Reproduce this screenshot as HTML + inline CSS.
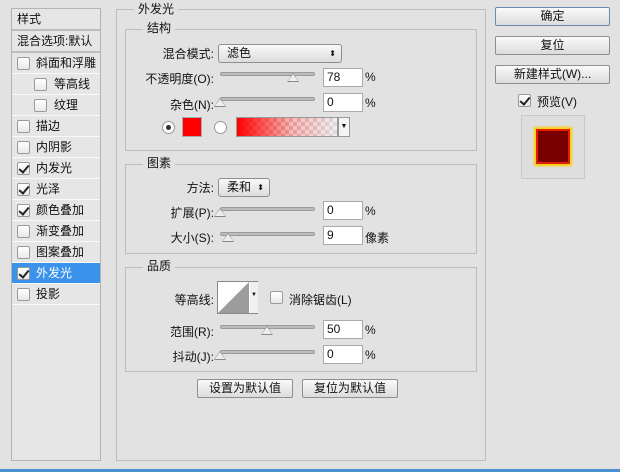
<!DOCTYPE html><html><head><meta charset="utf-8"><style>
*{box-sizing:border-box;margin:0;padding:0}
body{width:620px;height:472px;background:#e2e2e2;font-family:"Liberation Sans","Noto Sans CJK SC",sans-serif;font-size:12px;color:#111;position:relative;overflow:hidden}
.a{position:absolute}
.list{left:11px;top:8px;width:90px;height:453px;border:1px solid #b4b4b4;background:#e6e6e6}
.row{position:absolute;left:0;width:88px;height:21px;border-bottom:1px solid #fafafa;line-height:20px;padding-left:24px}
.cb{position:absolute;width:13px;height:13px;border:1px solid #9a9a9a;background:linear-gradient(#fff,#e8e8e8);border-radius:2px}
.row .cb{left:5px;top:4px}
.ck::after{content:"";position:absolute;left:3px;top:0px;width:4px;height:8px;border:solid #222;border-width:0 2px 2px 0;transform:rotate(40deg)}
.fs{border:1px solid #bdbdbd}
.lg{background:#e2e2e2;padding:0 4px;line-height:14px}
.r{text-align:right;width:100px}
.sl{height:4px;background:#bcbcbc;border:1px solid #9a9a9a;border-radius:2px}
.th{width:0;height:0;border-left:6px solid transparent;border-right:6px solid transparent;border-bottom:9px solid #888}
.th::after{content:"";position:absolute;left:-5px;top:1px;border-left:5px solid transparent;border-right:5px solid transparent;border-bottom:7px solid #eee}
.inp{width:40px;height:19px;background:#fff;border:1px solid #aaa;padding-left:3px;line-height:17px}
.btn{border:1px solid #8f8f8f;border-radius:2px;background:linear-gradient(#fafafa,#dcdcdc);text-align:center;line-height:17px;height:19px}
</style></head><body>
<div class="a list">
<div class="row" style="top:0;padding-left:5px;border-bottom:2px solid #bdbdbd;height:22px">样式</div>
<div class="row" style="top:22px;padding-left:5px;height:22px;border-bottom:2px solid #bdbdbd">混合选项:默认</div>
<div class="row" style="top:44px"><span class="cb"></span>斜面和浮雕</div>
<div class="row" style="top:65px;padding-left:42px"><span class="cb" style="left:22px"></span>等高线</div>
<div class="row" style="top:86px;padding-left:42px"><span class="cb" style="left:22px"></span>纹理</div>
<div class="row" style="top:107px"><span class="cb"></span>描边</div>
<div class="row" style="top:128px"><span class="cb"></span>内阴影</div>
<div class="row" style="top:149px"><span class="cb ck"></span>内发光</div>
<div class="row" style="top:170px"><span class="cb ck"></span>光泽</div>
<div class="row" style="top:191px"><span class="cb ck"></span>颜色叠加</div>
<div class="row" style="top:212px"><span class="cb"></span>渐变叠加</div>
<div class="row" style="top:233px"><span class="cb"></span>图案叠加</div>
<div class="row" style="top:254px;background:#3a92ea;color:#fff"><span class="cb ck"></span>外发光</div>
<div class="row" style="top:275px"><span class="cb"></span>投影</div>
</div>
<div class="a fs" style="left:116px;top:9px;width:370px;height:452px"></div>
<div class="a lg" style="left:134px;top:2px">外发光</div>
<div class="a fs" style="left:125px;top:29px;width:352px;height:122px"></div>
<div class="a lg" style="left:143px;top:21px">结构</div>
<div class="a r" style="left:114px;top:45px">混合模式:</div>
<div class="a btn" style="left:218px;top:44px;width:124px;text-align:left;padding-left:8px;border-radius:3px">滤色<span style="position:absolute;right:5px;font-size:8px">⬍</span></div>
<div class="a r" style="left:114px;top:70px">不透明度(O):</div>
<div class="a sl" style="left:220px;top:72px;width:95px"></div><div class="a th" style="left:287px;top:73px"></div>
<div class="a inp" style="left:323px;top:68px">78</div><div class="a" style="left:365px;top:70px">%</div>
<div class="a r" style="left:114px;top:96px">杂色(N):</div>
<div class="a sl" style="left:220px;top:97px;width:95px"></div><div class="a th" style="left:214px;top:98px"></div>
<div class="a inp" style="left:323px;top:93px">0</div><div class="a" style="left:365px;top:96px">%</div>
<div class="a" style="left:162px;top:121px;width:13px;height:13px;border:1px solid #999;border-radius:50%;background:#fff"><div class="a" style="left:3px;top:3px;width:5px;height:5px;border-radius:50%;background:#333"></div></div>
<div class="a" style="left:182px;top:117px;width:20px;height:20px;background:#f00;border:1px solid #aaa"></div>
<div class="a" style="left:214px;top:121px;width:13px;height:13px;border:1px solid #999;border-radius:50%;background:#fff"></div>
<div class="a" style="left:236px;top:117px;width:102px;height:20px;border:1px solid #999;background:linear-gradient(90deg,#f00,rgba(255,80,80,.4) 55%,rgba(230,230,230,.6)),repeating-conic-gradient(#ccc 0 25%,#fff 0 50%) 0 0/8px 8px"></div>
<div class="a" style="left:338px;top:117px;width:12px;height:20px;border:1px solid #999;background:#f4f4f4;font-size:7px;text-align:center;line-height:18px">▼</div>
<div class="a fs" style="left:125px;top:164px;width:352px;height:90px"></div>
<div class="a lg" style="left:143px;top:156px">图素</div>
<div class="a r" style="left:114px;top:179px">方法:</div>
<div class="a btn" style="left:218px;top:178px;width:52px;text-align:left;padding-left:8px;border-radius:3px">柔和<span style="position:absolute;right:5px;font-size:8px">⬍</span></div>
<div class="a r" style="left:114px;top:204px">扩展(P):</div>
<div class="a sl" style="left:220px;top:207px;width:95px"></div><div class="a th" style="left:214px;top:208px"></div>
<div class="a inp" style="left:323px;top:201px">0</div><div class="a" style="left:365px;top:204px">%</div>
<div class="a r" style="left:114px;top:229px">大小(S):</div>
<div class="a sl" style="left:220px;top:232px;width:95px"></div><div class="a th" style="left:222px;top:233px"></div>
<div class="a inp" style="left:323px;top:226px">9</div><div class="a" style="left:365px;top:229px">像素</div>
<div class="a fs" style="left:125px;top:267px;width:352px;height:105px"></div>
<div class="a lg" style="left:143px;top:259px">品质</div>
<div class="a r" style="left:114px;top:291px">等高线:</div>
<div class="a" style="left:217px;top:281px;width:41px;height:33px;border:1px solid #888;background:#fff"><svg width="33" height="31" class="a" style="left:0;top:0"><polygon points="0,31 31,0 31,31" fill="#9c9c9c"/></svg><div class="a" style="left:32px;top:0;width:8px;height:31px;background:#f0f0f0;font-size:6px;line-height:26px;text-align:center">▼</div></div>
<div class="a cb" style="left:270px;top:291px"></div><div class="a" style="left:289px;top:291px">消除锯齿(L)</div>
<div class="a r" style="left:114px;top:323px">范围(R):</div>
<div class="a sl" style="left:220px;top:325px;width:95px"></div><div class="a th" style="left:261px;top:326px"></div>
<div class="a inp" style="left:323px;top:320px">50</div><div class="a" style="left:365px;top:323px">%</div>
<div class="a r" style="left:114px;top:348px">抖动(J):</div>
<div class="a sl" style="left:220px;top:350px;width:95px"></div><div class="a th" style="left:214px;top:351px"></div>
<div class="a inp" style="left:323px;top:345px">0</div><div class="a" style="left:365px;top:348px">%</div>
<div class="a btn" style="left:197px;top:379px;width:96px">设置为默认值</div>
<div class="a btn" style="left:302px;top:379px;width:96px">复位为默认值</div>
<div class="a btn" style="left:495px;top:7px;width:115px;border-color:#6b8ab0">确定</div>
<div class="a btn" style="left:495px;top:36px;width:115px">复位</div>
<div class="a btn" style="left:495px;top:65px;width:115px">新建样式(W)...</div>
<div class="a cb ck" style="left:518px;top:94px"></div><div class="a" style="left:537px;top:93px">预览(V)</div>
<div class="a" style="left:521px;top:115px;width:64px;height:64px;border:1px solid #c8c8c8;background:#dedede"></div>
<div class="a" style="left:538px;top:131px;width:30px;height:31px;background:#7a0000;box-shadow:0 0 0 2px #e02000,0 0 2px 4px #ffd000"></div>
<div class="a" style="left:0;top:469px;width:620px;height:3px;background:#4a8fcf"></div>
</body></html>
